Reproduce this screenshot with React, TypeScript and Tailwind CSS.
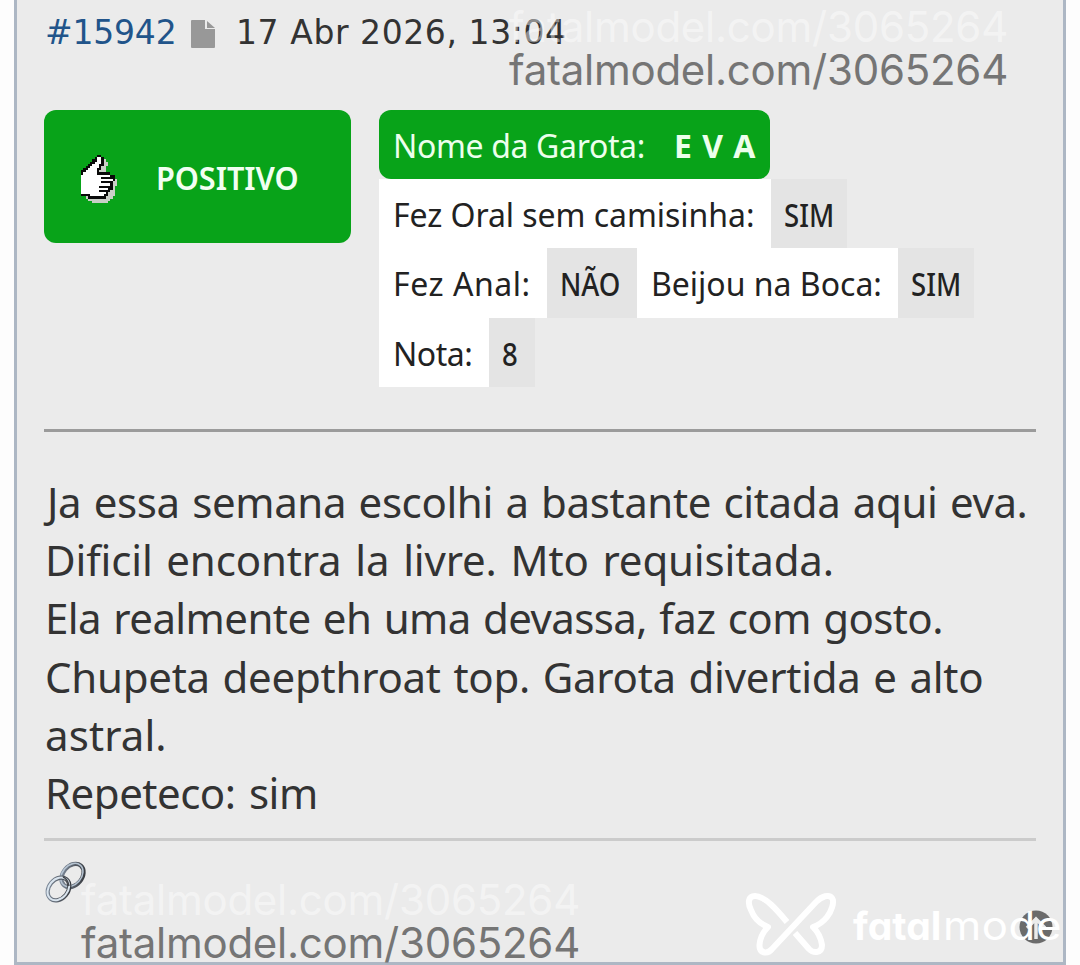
import { ReactNode } from 'react';
import clsx from 'clsx';

// Pixel art thumb: # outline, o hand, s shadow
const THUMB = [
  '.......##.......',
  '......#oo#......',
  '.....##oo#s.....',
  '....##ooo#ss....',
  '...##ooo##ss....',
  '..##oooo#ss.....',
  '.##oooo##ss.....',
  '##ooooo#sss.....',
  '#oooooo######...',
  'ooooooooooooo##.',
  'ooooooooo######.',
  'oooooooooooooo#s',
  'ooooooooo#####ss',
  'ooooooooooooo#ss',
  'oooooooo######s.',
  'oooooooooooo##s.',
  'oooooooo#####ss.',
  'ooooooooooo#sss.',
  '####oooooo##sss.',
  '..s########sss..',
  '...ssssssssss...',
  '.....sssssss....',
];

const PIXEL_COLORS: Record<string, string> = {
  '#': '#0a0a0a',
  o: '#ffffff',
  s: '#c9cfc6',
};

const POST_LINES = [
  { text: 'Ja essa semana escolhi a bastante citada aqui eva.', className: 'pl-[2px] tracking-[-0.39px] [word-spacing:2px]' },
  { text: 'Dificil encontra la livre. Mto requisitada.', className: 'tracking-[-0.15px] [word-spacing:3px]' },
  { text: 'Ela realmente eh uma devassa, faz com gosto.', className: 'tracking-[-0.58px] [word-spacing:2px]' },
  { text: 'Chupeta deepthroat top. Garota divertida e alto', className: 'tracking-[-0.26px] [word-spacing:2px]' },
  { text: 'astral.', className: 'tracking-[0.1px]' },
  { text: 'Repeteco: sim', className: 'tracking-[-0.5px] [word-spacing:3px]' },
];

function ThumbIcon() {
  return (
    <svg width="36" height="48" viewBox="0 0 16 22" preserveAspectRatio="none" shapeRendering="crispEdges">
      {THUMB.map((row, y) =>
        row.split('').map((c, x) =>
          c === '.' ? null : <rect key={`${x}-${y}`} x={x} y={y} width="1" height="1" fill={PIXEL_COLORS[c]} />
        )
      )}
    </svg>
  );
}

function ChainIcon() {
  return (
    <svg width="46" height="46" viewBox="0 0 46 46" fill="none">
      <defs>
        <linearGradient id="steel" x1="0" y1="0" x2="1" y2="1">
          <stop offset="0" stopColor="#8593a5" />
          <stop offset="0.5" stopColor="#5b626c" />
          <stop offset="1" stopColor="#2f3237" />
        </linearGradient>
      </defs>
      <g transform="rotate(-50 28.500 15.500)">
        <ellipse cx="28.500" cy="15.500" rx="13" ry="9.500" stroke="url(#steel)" strokeWidth="4.200" />
        <ellipse cx="28.500" cy="14.700" rx="13" ry="9.500" stroke="#b4c2d0" strokeWidth="1.600" />
      </g>
      <g transform="rotate(-50 14.500 29)">
        <ellipse cx="14.500" cy="29" rx="12.500" ry="9.500" stroke="url(#steel)" strokeWidth="4.200" />
        <ellipse cx="14.500" cy="28.800" rx="12.500" ry="9.500" stroke="#d9e4ee" strokeWidth="2" />
      </g>
      <path d="M19 17c3 1 5 4 6 9" stroke="#44474d" strokeWidth="1.500" />
    </svg>
  );
}

function Label({ className, children }: { className?: string; children: ReactNode }) {
  return <span className={clsx('bg-white pl-[14px] pt-[2px]', className)}>{children}</span>;
}

function Value({ children }: { children: ReactNode }) {
  return (
    <span className="bg-[#e4e4e4] pl-[13px] pt-[2px] font-medium">
      <span className="block origin-left scale-x-[0.86]">{children}</span>
    </span>
  );
}

function Watermark({ className }: { className: string }) {
  return (
    <div
      className={clsx(
        "absolute whitespace-nowrap font-['Inter',sans-serif] text-[42px] leading-[42px] tracking-[-0.25px]",
        className
      )}
    >
      <div className="h-[43px] text-white/45">fatalmodel.com/3065264</div>
      <div className="text-[#757575]">fatalmodel.com/3065264</div>
    </div>
  );
}

export default function App() {
  return (
    <div className="relative h-[965px] w-[1080px] overflow-hidden bg-[#fdfdfd] pl-[14px] font-['Noto_Sans',sans-serif] text-[#333]">
      <div className="h-[965px] w-[1052px] border-x-[3px] border-b-[3px] border-[#adb7c4] bg-[#ebebeb] px-[27px]">
        <div className="flex h-[110px] whitespace-nowrap pt-[13px] font-['DejaVu_Sans',sans-serif] text-[33px] leading-[40px]">
          <span className="w-[147px] pl-[1px] tracking-[-0.2px] text-[#21548a]">#15942</span>
          <svg className="mt-[7px]" width="24" height="28" viewBox="0 0 24 28" fill="#989898">
            <path d="M1 0h13v9h10v18a1 1 0 0 1-1 1H1a1 1 0 0 1-1-1V1a1 1 0 0 1 1-1zM16 1l8 7h-8z" />
          </svg>
          <span className="ml-[21px] tracking-[0.58px]">17 Abr 2026, 13:04</span>
        </div>

        <div className="flex h-[319px]">
          <div className="flex h-[133px] w-[307px] shrink-0 items-center rounded-[12px] bg-[#08a319] pl-[37px]">
            <div className="mt-[5px]">
              <ThumbIcon />
            </div>
            <span className="ml-[39px] mt-[3px] w-[150px] origin-left scale-x-[0.93] text-[33px] font-semibold tracking-[-0.1px] text-[#f2fff2]">
              POSITIVO
            </span>
          </div>

          <div className="ml-[28px] whitespace-nowrap text-[32px] leading-[67px] text-[#222]">
            <div className="flex h-[69px] w-[391px] rounded-[12px] bg-[#08a319] pl-[14px] pt-[2px] text-[#ecffec]">
              <span className="w-[281px] tracking-[-0.35px]">Nome da Garota:</span>
              <b className="tracking-[1px]">E V A</b>
            </div>
            <div className="grid h-[69px] grid-cols-[392px_76px]">
              <Label className="tracking-[-0.05px]">Fez Oral sem camisinha:</Label>
              <Value>SIM</Value>
            </div>
            <div className="grid h-[70px] grid-cols-[168px_90px_261px_76px] leading-[68px]">
              <Label className="tracking-[0.55px]">Fez Anal:</Label>
              <Value>NÃO</Value>
              <Label>Beijou na Boca:</Label>
              <Value>SIM</Value>
            </div>
            <div className="grid h-[69px] grid-cols-[110px_46px]">
              <Label className="tracking-[-0.5px]">Nota:</Label>
              <Value>8</Value>
            </div>
          </div>
        </div>

        <div className="h-[3px] w-[992px] bg-[#9b9b9b]" />

        <div className="h-[406px] whitespace-nowrap pl-[1px] pt-[41px] text-[42px] leading-[58.2px]">
          {POST_LINES.map((line) => (
            <div key={line.text} className={line.className}>
              {line.text}
            </div>
          ))}
        </div>

        <div className="h-[3px] w-[992px] bg-[#cbcbcb]" />
        <div className="pt-[19px]">
          <ChainIcon />
        </div>
      </div>

      <Watermark className="left-[509px] top-[6px]" />
      <Watermark className="left-[81px] top-[879px]" />

      {/* Scroll to top button under the brand mark */}
      <svg className="absolute left-[1019px] top-[910px]" width="34" height="34" viewBox="0 0 34 34">
        <circle cx="17" cy="17" r="16.500" fill="#6b6b6b" />
        <path d="M17 29V9M8 18l9-9 9 9" fill="none" stroke="#ebebeb" strokeWidth="3.500" />
      </svg>

      <svg className="absolute left-[744px] top-[890px]" width="94" height="68" viewBox="0 0 94 68" fill="none" stroke="#fff" strokeWidth="6" strokeLinejoin="round">
        <path d="M43 32C33 20 21 6 11 6C4 6 3.500 13 7 20C10 28 16 34 24 37C18 43 16 48 15.500 55C15 63 23 65 28 59L72 12C78 6 85 4 88 8C91 12 87 22 83 27C79 32 75 35 69 37C75 43 77 48 78 55C78 63 70 64 65 59L51 43" />
      </svg>
      <div className="absolute left-[853px] top-[901px] flex whitespace-nowrap font-['Inter',sans-serif] text-[39px] leading-[50px] text-white [font-feature-settings:'cv11']">
        <b>fatal</b>
        <span className="ml-[2px] origin-left scale-x-[1.12] tracking-[0.5px]">mode</span>
      </div>
    </div>
  );
}
